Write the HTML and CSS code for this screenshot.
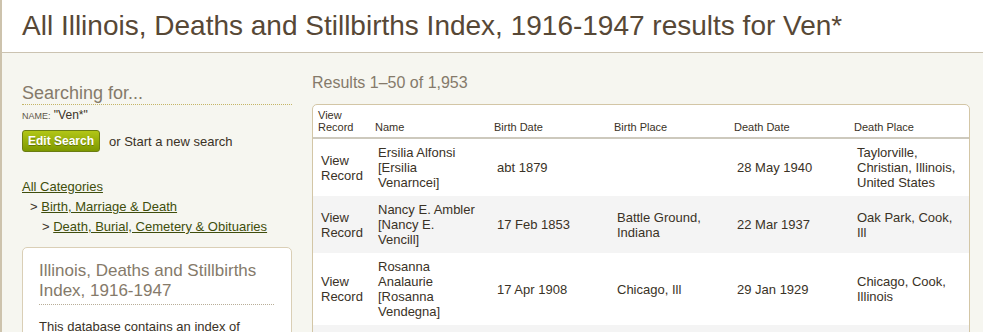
FILE: index.html
```html
<!DOCTYPE html>
<html lang="en">
<head>
    <meta charset="UTF-8">
    <title>All Illinois, Deaths and Stillbirths Index, 1916-1947 results for Ven*</title>
    <link rel="stylesheet" href="styles.css">
</head>
<body>
    <div class="page">
        <div class="page-header">
            <h1>All Illinois, Deaths and Stillbirths Index, 1916-1947 results for Ven*</h1>
        </div>

        <div class="main">
            <div class="sidebar">
                <h2 class="searching">Searching for...</h2>
                <p class="criteria"><span class="criteria-label">NAME:</span> "Ven*"</p>
                <div class="search-actions">
                    <button class="edit-btn">Edit Search</button>
                    <span class="new-search">or Start a new search</span>
                </div>

                <ul class="categories">
                    <li><a href="#">All Categories</a></li>
                    <li class="level-1">&gt; <a href="#">Birth, Marriage &amp; Death</a></li>
                    <li class="level-2">&gt; <a href="#">Death, Burial, Cemetery &amp; Obituaries</a></li>
                </ul>

                <div class="db-box">
                    <h3>Illinois, Deaths and Stillbirths Index, 1916-1947</h3>
                    <p>This database contains an index of</p>
                </div>
            </div>

            <div class="results">
                <p class="results-count">Results 1&ndash;50 of 1,953</p>
                <div class="table-box">
                    <table class="results-table">
                        <thead>
                            <tr>
                                <th class="col-view">View Record</th>
                                <th class="col-name">Name</th>
                                <th>Birth Date</th>
                                <th>Birth Place</th>
                                <th>Death Date</th>
                                <th>Death Place</th>
                            </tr>
                        </thead>
                        <tbody>
                            <tr>
                                <td><a href="#">View Record</a></td>
                                <td class="name">Ersilia Alfonsi [Ersilia Venarncei]</td>
                                <td>abt 1879</td>
                                <td></td>
                                <td>28 May 1940</td>
                                <td>Taylorville, Christian, Illinois, United States</td>
                            </tr>
                            <tr>
                                <td><a href="#">View Record</a></td>
                                <td class="name">Nancy E. Ambler [Nancy E. Vencill]</td>
                                <td>17 Feb 1853</td>
                                <td>Battle Ground, Indiana</td>
                                <td>22 Mar 1937</td>
                                <td>Oak Park, Cook, Ill</td>
                            </tr>
                            <tr>
                                <td><a href="#">View Record</a></td>
                                <td class="name">Rosanna Analaurie [Rosanna Vendegna]</td>
                                <td>17 Apr 1908</td>
                                <td>Chicago, Ill</td>
                                <td>29 Jan 1929</td>
                                <td>Chicago, Cook, Illinois</td>
                            </tr>
                            <!-- next row starts just below the fold -->
                            <tr class="row-stub">
                                <td></td>
                                <td class="name"></td>
                                <td></td>
                                <td></td>
                                <td></td>
                                <td></td>
                            </tr>
                        </tbody>
                    </table>
                </div>
            </div>
        </div>
    </div>
</body>
</html>
```

FILE: styles.css
```css
:root {
    --tan: #d3c6a6;
    --page-bg: #f6f6f0;
    --text: #3a3226;
    --muted: #857a6a;
    --link: #3f4e0c;
}

* {
    margin: 0;
    padding: 0;
    box-sizing: border-box;
}

body {
    font-family: "Liberation Sans", Arial, sans-serif;
    background-color: var(--page-bg);
    color: var(--text);
    font-size: 13px;
    overflow: hidden;
}

.page {
    border-left: 2px solid #cdc3ad;
    min-height: 100vh;
}

.page-header {
    background-color: #ffffff;
    border-bottom: 1px solid #cbc3b1;
    height: 53px;
    padding: 9px 0 0 20px;
}

.page-header h1 {
    font-size: 28px;
    font-weight: normal;
    color: #574836;
    line-height: 34px;
    white-space: nowrap;
}

.main {
    display: flex;
    gap: 20px;
    padding-left: 20px;
}

/* sidebar */
.sidebar {
    width: 270px;
    flex-shrink: 0;
    padding-top: 30px;
}

.searching {
    font-size: 18px;
    font-weight: normal;
    color: var(--muted);
    line-height: 21px;
    border-bottom: 1px dotted #c4b566;
}

.criteria {
    font-size: 12px;
    margin-top: 3px;
    line-height: 14px;
    color: var(--text);
}

.criteria-label {
    font-size: 9px;
    color: #5e5648;
}

.search-actions {
    display: flex;
    align-items: center;
    margin-top: 7px;
}

.edit-btn {
    font-family: "Liberation Sans", Arial, sans-serif;
    font-size: 12px;
    font-weight: bold;
    color: #ffffff;
    text-shadow: 0 1px 0 rgba(0, 0, 0, 0.3);
    background: linear-gradient(#b2c616, #7d9800);
    border: 1px solid #6b7d12;
    border-radius: 3px;
    width: 78px;
    height: 22px;
    cursor: pointer;
}

.new-search {
    margin-left: 9px;
    font-size: 13px;
}

.categories {
    list-style: none;
    margin-top: 25px;
    line-height: 20px;
    font-size: 13px;
}

.categories a {
    color: var(--link);
    text-decoration: underline;
}

.categories .level-1 {
    padding-left: 8px;
}

.categories .level-2 {
    padding-left: 20px;
}

.db-box {
    margin-top: 10px;
    background-color: #ffffff;
    border: 1px solid #dacfb6;
    border-radius: 5px;
    padding: 13px 16px 20px;
}

.db-box h3 {
    font-size: 17px;
    font-weight: normal;
    color: var(--muted);
    line-height: 20px;
    border-bottom: 1px dotted #b8ae98;
    padding-bottom: 3px;
    margin-right: 1px;
}

.db-box p {
    margin-top: 14px;
    font-size: 13px;
    line-height: 16px;
}

/* results */
.results {
    width: 658px;
    padding-top: 20px;
}

.results-count {
    font-size: 16px;
    color: var(--muted);
    line-height: 20px;
    margin-bottom: 11px;
}

.table-box {
    background-color: #ffffff;
    border: 1px solid var(--tan);
    border-radius: 5px;
    overflow: hidden;
}

.results-table {
    width: 100%;
    border-collapse: collapse;
    table-layout: fixed;
}

.results-table th {
    font-size: 11px;
    font-weight: normal;
    text-align: left;
    vertical-align: bottom;
    line-height: 12px;
    padding: 4px 5px 4px;
    height: 33px;
    width: 120px;
    border-bottom: 2px solid #cdc9bd;
    color: var(--text);
}

.results-table th.col-view {
    width: 57px;
}

.results-table th.col-name {
    width: 119px;
}

.results-table td {
    font-size: 13px;
    line-height: 15px;
    padding: 6px 8px;
    vertical-align: middle;
}

.results-table td.name {
    padding-right: 13px;
}

.results-table td a {
    color: var(--text);
    text-decoration: none;
}

.results-table tbody tr:nth-child(even) {
    background-color: #f4f4f4;
}

.results-table .row-stub td {
    height: 57px;
}
```
